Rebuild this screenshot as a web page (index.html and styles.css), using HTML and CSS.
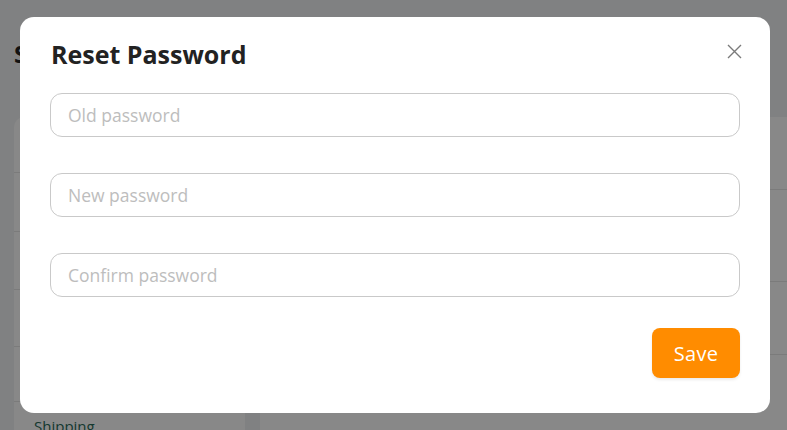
FILE: index.html
```html
<!DOCTYPE html>
<html lang="en">
<head>
<meta charset="utf-8">
<title>Reset Password</title>
<link rel="stylesheet" href="styles.css">
</head>
<body>
<div class="page">
  <div class="page-head">Settings</div>
  <div class="page-body">
    <aside class="side-card">
      <div class="side-row r1"></div>
      <div class="side-row r2"></div>
      <div class="side-row r3"></div>
      <div class="side-row r4"></div>
      <div class="side-row r5"></div>
      <div class="side-row last">Shipping</div>
    </aside>
    <main class="main-card">
      <div class="main-row"></div>
      <div class="main-row"></div>
      <div class="main-row"></div>
      <div class="main-row dots">••••••</div>
    </main>
  </div>
</div>
<div class="overlay">
  <div class="modal">
    <div class="modal-head">
      <h1 class="modal-title">Reset Password</h1>
      <button class="close" aria-label="Close">
        <svg width="15" height="15" viewBox="0 0 15 15"><path d="M1 1 L14 14 M14 1 L1 14" stroke="#7a7a7a" stroke-width="1.4" fill="none"/></svg>
      </button>
    </div>
    <div class="fields">
      <input class="field" type="password" placeholder="Old password">
      <input class="field" type="password" placeholder="New password">
      <input class="field" type="password" placeholder="Confirm password">
    </div>
    <div class="actions">
      <button class="save">Save</button>
    </div>
  </div>
</div>
</body>
</html>
```
FILE: styles.css
```css
* { box-sizing: border-box; }
html, body { margin: 0; height: 100%; }
body {
  font-family: "Open Sans", "Noto Sans", sans-serif;
  background: #f1f2f4;
  overflow: hidden;
}
.page { padding: 0 0 0 14px; height: 100%; overflow: hidden; }
.page-head {
  height: 117px;
  padding-top: 37px;
  font-size: 24px;
  font-weight: 700;
  color: #222;
}
.page-body { display: flex; gap: 15px; }
.side-card {
  width: 231px;
  background: #fff;
  border-radius: 10px 10px 0 0;
  flex: none;
}
.side-row { border-bottom: 1px solid #e6e6e6; }
.side-row.r1 { height: 56px; }
.side-row.r2 { height: 59px; }
.side-row.r3 { height: 58px; }
.side-row.r4 { height: 57px; }
.side-row.r5 { height: 55px; }
.side-row.last { border: none; padding: 14px 20px 0; color: #2a6b5a; font-size: 15px; line-height: 20px; }
.main-card { flex: 1; background: #fff; }
.main-row { height: 73px; border-bottom: 1px solid #e6e6e6; }
.main-row:nth-child(2) { height: 92px; }
.main-row.dots { border: none; padding: 20px 100px; font-size: 9px; line-height: 12px; color: #111; }

.overlay {
  position: fixed;
  inset: 0;
  background: rgba(0, 0, 0, 0.465);
  padding: 17px 17px 0 20px;
}
.modal {
  width: 750px;
  height: 396px;
  background: #fff;
  border-radius: 14px;
  padding: 24px 30px 0 30px;
}
.modal-head {
  display: flex;
  justify-content: space-between;
  align-items: flex-start;
  height: 52px;
}
.modal-title {
  margin: 0;
  font-size: 25px;
  font-weight: 700;
  color: #222;
  line-height: 26px;
  padding-left: 1px;
}
.close {
  border: none;
  background: none;
  padding: 0;
  margin: 3px -2px 0 0;
  width: 15px;
  height: 15px;
  cursor: pointer;
}
.close svg { display: block; }
.fields { display: flex; flex-direction: column; gap: 36px; }
.field {
  height: 44px;
  width: 690px;
  border: 1px solid #c9c9c9;
  border-radius: 12px;
  padding: 0 17px;
  font-family: inherit;
  font-size: 17.5px;
  color: #333;
  outline: none;
}
.field::placeholder { color: #bdbdbd; }
.actions { display: flex; justify-content: flex-end; margin-top: 31px; }
.save {
  width: 88px;
  height: 50px;
  border: none;
  border-radius: 8px;
  background: #ff8c00;
  color: #fff;
  font-family: inherit;
  font-size: 20px;
  font-weight: 500;
  letter-spacing: 0.3px;
  box-shadow: 0 2px 3px rgba(0, 0, 0, 0.08);
  cursor: pointer;
}
```
